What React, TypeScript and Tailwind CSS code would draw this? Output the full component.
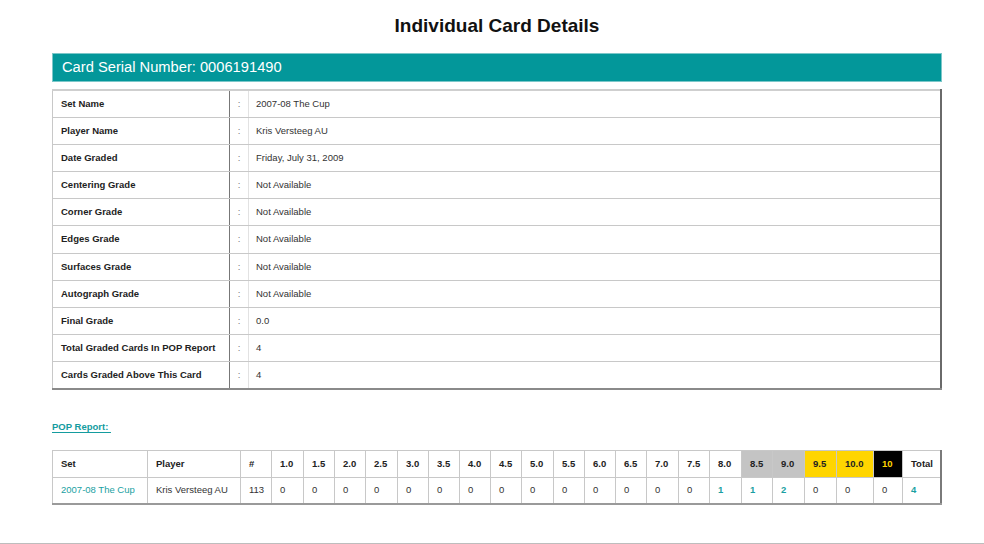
const details: [string, string][] = [
  ["Set Name", "2007-08 The Cup"],
  ["Player Name", "Kris Versteeg AU"],
  ["Date Graded", "Friday, July 31, 2009"],
  ["Centering Grade", "Not Available"],
  ["Corner Grade", "Not Available"],
  ["Edges Grade", "Not Available"],
  ["Surfaces Grade", "Not Available"],
  ["Autograph Grade", "Not Available"],
  ["Final Grade", "0.0"],
  ["Total Graded Cards In POP Report", "4"],
  ["Cards Graded Above This Card", "4"],
];

type Grade = { label: string; count: number; width: number; head?: string };

const grades: Grade[] = [
  { label: "1.0", count: 0, width: 32 },
  { label: "1.5", count: 0, width: 31 },
  { label: "2.0", count: 0, width: 31 },
  { label: "2.5", count: 0, width: 32 },
  { label: "3.0", count: 0, width: 31 },
  { label: "3.5", count: 0, width: 31 },
  { label: "4.0", count: 0, width: 31 },
  { label: "4.5", count: 0, width: 31 },
  { label: "5.0", count: 0, width: 32 },
  { label: "5.5", count: 0, width: 31 },
  { label: "6.0", count: 0, width: 31 },
  { label: "6.5", count: 0, width: 31 },
  { label: "7.0", count: 0, width: 32 },
  { label: "7.5", count: 0, width: 31 },
  { label: "8.0", count: 1, width: 32 },
  { label: "8.5", count: 1, width: 31, head: "bg-[#c4c4c4] text-[#222]" },
  { label: "9.0", count: 2, width: 32, head: "bg-[#c4c4c4] text-[#222]" },
  { label: "9.5", count: 0, width: 32, head: "bg-[#ffd500] text-[#222]" },
  { label: "10.0", count: 0, width: 37, head: "bg-[#ffd500] text-[#222]" },
  { label: "10", count: 0, width: 29, head: "bg-black text-[#ffd500]" },
];

const cell = "border border-[#c8c8c8] px-2 text-left align-middle";

export default function App() {
  return (
    <div className="relative h-[544px] w-[984px] overflow-hidden bg-white font-['Liberation_Sans',Arial,sans-serif] text-[#222]">
      <div className="ml-[52px] w-[890px]">
        <h1 className="pt-[14px] text-center text-[19px] font-bold leading-[23px] text-[#111]">
          Individual Card Details
        </h1>

        <div className="mt-[16px] flex h-[29px] items-center border border-[#7cc7c9] bg-[#03979a] pl-[9px] text-[14.7px] text-white">
          Card Serial Number: 0006191490
        </div>

        <table className="mt-[7px] w-[890px] table-fixed border-collapse border-b-2 border-r-2 border-l border-t-2 border-b-[#8a8a8a] border-r-[#6a6a6a] border-l-[#c8c8c8] border-t-[#cfcfcf] text-[9.5px]">
          <colgroup>
            <col className="w-[177px]" />
            <col className="w-[19px]" />
            <col />
          </colgroup>
          <tbody>
            {details.map(([label, value]) => (
              <tr key={label} className="h-[27.2px]">
                <td className="whitespace-nowrap border-b border-r border-b-[#c8c8c8] border-r-[#777] pl-[8px] font-bold text-[#222]">
                  {label}
                </td>
                <td className="border-b border-r border-b-[#c8c8c8] border-r-[#e2e2e2] text-center text-[#777]">:</td>
                <td className="border-b border-b-[#c8c8c8] pl-[7px] text-[#333]">{value}</td>
              </tr>
            ))}
          </tbody>
        </table>

        <div className="mt-[30px] text-[9.5px] font-bold text-[#149c9f] underline underline-offset-2">
          POP Report:&nbsp;
        </div>

        <table className="mt-[16px] w-[890px] table-fixed border-collapse border-b-2 border-r-2 border-b-[#9a9a9a] border-r-[#7a7a7a] text-[9.5px]">
          <colgroup>
            <col className="w-[95px]" />
            <col className="w-[93px]" />
            <col className="w-[31px]" />
            {grades.map((g) => (
              <col key={g.label} style={{ width: g.width }} />
            ))}
            <col />
          </colgroup>
          <thead>
            <tr className="h-[27px]">
              <th className={`${cell} font-bold`}>Set</th>
              <th className={`${cell} font-bold`}>Player</th>
              <th className={`${cell} font-bold`}>#</th>
              {grades.map((g) => (
                <th key={g.label} className={`${cell} whitespace-nowrap font-bold ${g.head ?? ""}`}>
                  {g.label}
                </th>
              ))}
              <th className={`${cell} font-bold`}>Total</th>
            </tr>
          </thead>
          <tbody>
            <tr className="h-[26px]">
              <td className={`${cell} whitespace-nowrap text-[#1a9fa2]`}>2007-08 The Cup</td>
              <td className={`${cell} whitespace-nowrap text-[#333]`}>Kris Versteeg AU</td>
              <td className={`${cell} text-[#333]`}>113</td>
              {grades.map((g) => (
                <td
                  key={g.label}
                  className={`${cell} ${g.count > 0 ? "font-bold text-[#1a9fa2]" : "text-[#333]"}`}
                >
                  {g.count}
                </td>
              ))}
              <td className={`${cell} font-bold text-[#1a9fa2]`}>4</td>
            </tr>
          </tbody>
        </table>
      </div>

      <div className="absolute bottom-0 left-0 h-[1px] w-full bg-[#bdbdbd]" />
    </div>
  );
}
